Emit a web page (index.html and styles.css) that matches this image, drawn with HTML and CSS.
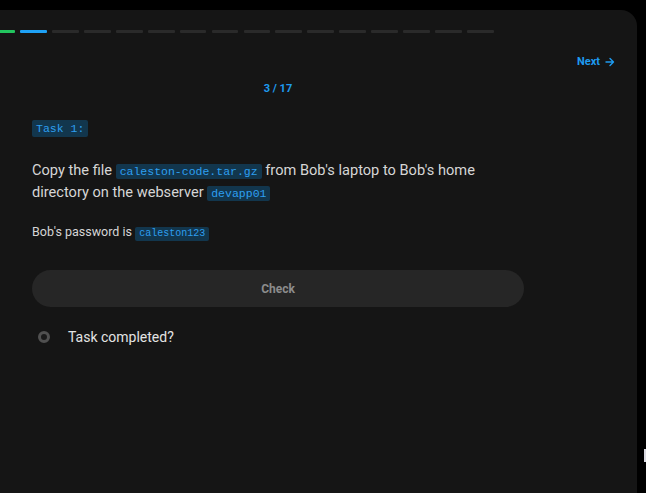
FILE: index.html
```html
<!DOCTYPE html>
<html>
<head>
<meta charset="utf-8">
<link rel="stylesheet" href="styles.css">
</head>
<body>
<div class="page">
  <div class="panel">
    <div class="progress">
      <span class="seg done"></span>
      <span class="seg done"></span>
      <span class="seg current"></span>
      <span class="seg"></span><span class="seg"></span><span class="seg"></span><span class="seg"></span>
      <span class="seg"></span><span class="seg"></span><span class="seg"></span><span class="seg"></span>
      <span class="seg"></span><span class="seg"></span><span class="seg"></span><span class="seg"></span>
      <span class="seg"></span><span class="seg"></span>
    </div>
    <div class="nav">
      <a class="next">Next
        <svg class="arrow" width="10" height="10" viewBox="0 0 10 10"><path d="M1 5h7.5M5 1.5L8.5 5 5 8.5" fill="none" stroke="currentColor" stroke-width="1.4" stroke-linecap="round" stroke-linejoin="round"/></svg>
      </a>
    </div>
    <div class="content">
      <div class="counter">3 / 17</div>
      <div class="badge-row"><code class="badge">Task 1:</code></div>
      <p class="task">Copy the file <code class="code">caleston-code.tar.gz</code> from Bob's laptop to Bob's home directory on the webserver <code class="code">devapp01</code></p>
      <p class="note">Bob's password is <code class="code small">caleston123</code></p>
      <button class="check">Check</button>
      <div class="done-row">
        <span class="radio"></span>
        <span class="done-label">Task completed?</span>
      </div>
    </div>
  </div>
  <span class="edge-mark"></span>
</div>
</body>
</html>
```

FILE: styles.css
```css
html, body {
  margin: 0;
  padding: 0;
  background: #000;
  height: 100%;
  overflow: hidden;
}
.page {
  position: relative;
  padding-top: 10px;
  height: 483px;
  font-family: Roboto, "Liberation Sans", sans-serif;
}
.panel {
  margin-left: -40px;
  width: 677px;
  height: 483px;
  background: #151515;
  border-top-right-radius: 16px;
  box-sizing: border-box;
}
.progress {
  display: grid;
  grid-template-columns: repeat(17, 1fr);
  gap: 5.2px;
  width: 537px;
  margin-left: -3.5px;
  padding-top: 20px;
}
.seg {
  height: 3px;
  border-radius: 1px;
  background: #2a2a2a;
}
.seg.done { background: #22c55e; }
.seg.current { background: #1ea1f5; }
.nav {
  display: flex;
  justify-content: flex-end;
  padding-right: 22px;
  margin-top: 22px;
}
.next {
  display: flex;
  align-items: center;
  gap: 5px;
  font-size: 11px;
  font-weight: 700;
  line-height: 14px;
  color: #1e9bf0;
}
.arrow { display: block; }
.content {
  margin-left: 72px;
  width: 492px;
}
.counter {
  margin-top: 13px;
  text-align: center;
  font-size: 11px;
  font-weight: 700;
  line-height: 14px;
  color: #1e9bf0;
}
.badge-row {
  margin-top: 24px;
  display: flex;
}
.badge {
  display: block;
  height: 17px;
  line-height: 17px;
  padding: 0 4px;
  border-radius: 2px;
  background: #12364d;
  color: #2e9ff0;
  font-family: "Liberation Mono", monospace;
  font-size: 11.5px;
}
.task {
  margin: 22px 0 0;
  font-size: 14.6px;
  line-height: 22px;
  color: #d6d6d6;
}
.code {
  display: inline-block;
  line-height: 15px;
  padding: 0 4px;
  border-radius: 2px;
  background: #12364d;
  color: #2e9ff0;
  font-family: "Liberation Mono", monospace;
  font-size: 11.5px;
}
.code.small {
  font-size: 10px;
  line-height: 14px;
}
.note {
  margin: 20px 0 0;
  font-size: 12.5px;
  line-height: 18px;
  color: #d6d6d6;
}
.check {
  display: block;
  margin-top: 29px;
  width: 492px;
  height: 37px;
  border: none;
  border-radius: 19px;
  background: #262626;
  color: #8c8c8c;
  font-family: Roboto, "Liberation Sans", sans-serif;
  font-size: 12px;
  font-weight: 700;
}
.done-row {
  margin-top: 20px;
  display: flex;
  align-items: center;
  height: 20px;
  padding-left: 6px;
}
.radio {
  width: 6px;
  height: 6px;
  border: 3px solid #505050;
  border-radius: 50%;
  background: #1a1a1a;
}
.done-label {
  margin-left: 18px;
  font-size: 14px;
  color: #e3e3e3;
}
.edge-mark {
  position: absolute;
  left: 644px;
  top: 449px;
  width: 2px;
  height: 13px;
  background: #d8d8e0;
}
```
